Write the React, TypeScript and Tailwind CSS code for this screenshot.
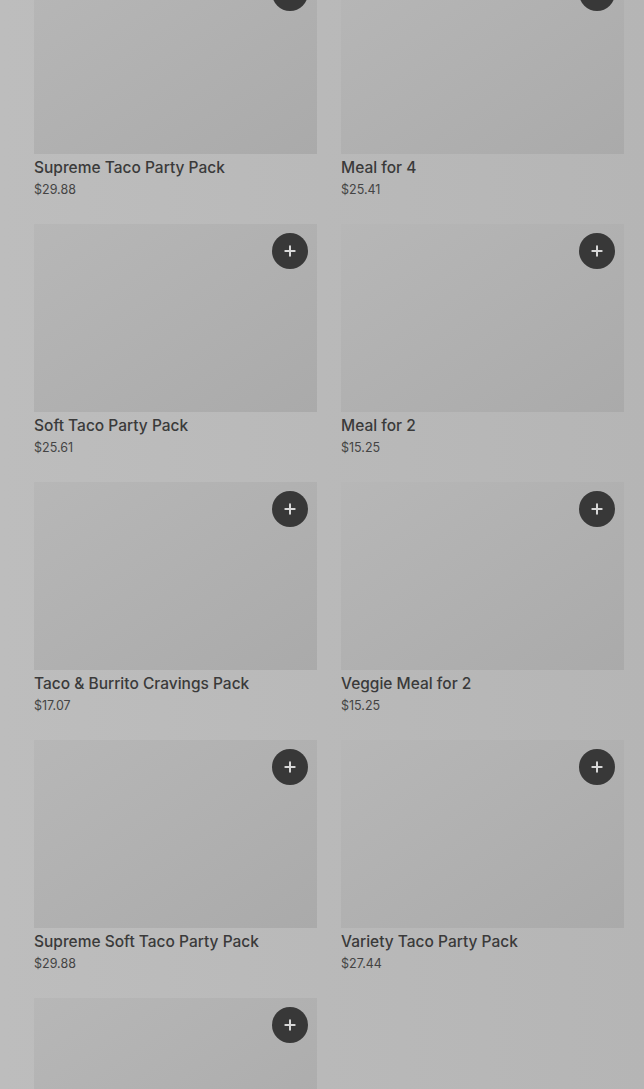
import { Plus } from 'lucide-react';

interface Product {
  name: string;
  price: string;
}

const products: Product[] = [
  { name: "Supreme Taco Party Pack", price: "$29.88" },
  { name: "Meal for 4", price: "$25.41" },
  { name: "Soft Taco Party Pack", price: "$25.61" },
  { name: "Meal for 2", price: "$15.25" },
  { name: "Taco & Burrito Cravings Pack", price: "$17.07" },
  { name: "Veggie Meal for 2", price: "$15.25" },
  { name: "Supreme Soft Taco Party Pack", price: "$29.88" },
  { name: "Variety Taco Party Pack", price: "$27.44" },
  { name: "Party Pack", price: "$29.88" },
];

const ProductCard = ({ product }: { product: Product }) => (
  <div className="flex flex-col">
    <div className="relative h-[188px] bg-gradient-to-br from-[#b7b7b7] to-[#aaaaaa]">
      <button className="absolute right-[9px] top-[9px] w-9 h-9 rounded-full bg-[#383838] flex items-center justify-center">
        <Plus className="text-[#d8d8d8]" size={16} strokeWidth={3} />
      </button>
    </div>
    <p className="mt-[2px] text-[15.5px] leading-6 font-medium text-[#3a3a3a]">{product.name}</p>
    <p className="text-[12.5px] leading-5 text-[#444]">{product.price}</p>
  </div>
);

export default function App() {
  return (
    <div
      className="min-h-screen bg-gradient-to-r from-[#bdbdbd] to-[#b5b5b5]"
      style={{ fontFamily: 'Inter, "Noto Sans", sans-serif' }}
    >
      <div className="pl-[34px] pr-[20px] -mt-[34px] grid grid-cols-2 gap-x-6 gap-y-6">
        {products.map((p, i) => (
          <ProductCard key={i} product={p} />
        ))}
      </div>
    </div>
  );
}
